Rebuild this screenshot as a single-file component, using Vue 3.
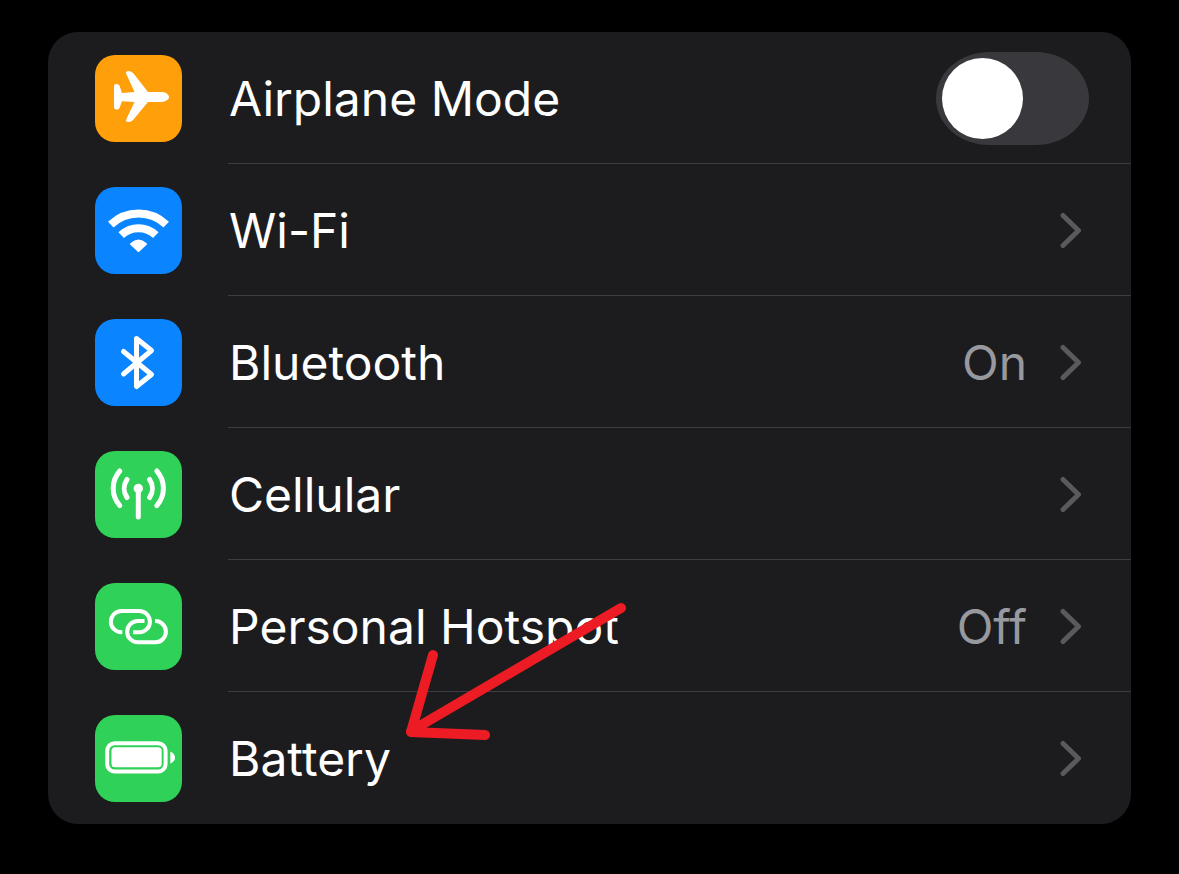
<template>
  <main class="settings">
    <ul class="group">
      <li v-for="item in items" :key="item.id">
        <component
          :is="item.toggle ? 'label' : 'a'"
          class="row"
          :for="item.toggle ? item.id : undefined"
          :href="item.toggle ? undefined : '#' + item.id"
        >
          <span class="tile" :class="item.color">
            <svg v-if="item.id === 'airplane'" viewBox="0 0 87 87" aria-hidden="true">
              <path
                class="solid"
                d="M53 37 L38.5 18.5 Q36.5 16 33.5 16 Q30.3 16 31.2 18.7 L39.5 37 L27 38 L24.5 30.6 Q23.8 29 21.5 29 Q19 29 19 31 V52.5 Q19 54.5 21.5 54.5 Q23.8 54.5 24.5 53 L27 46.3 L39.5 47 L31.2 64.5 Q30.3 67 33.5 67 Q36.5 67 38.5 64.5 L53 47 H67 C71 46.5 74 44.5 74 42 C74 39.5 71 37.3 67 37 Z"
              />
            </svg>
            <svg v-else-if="item.id === 'wifi'" viewBox="0 0 87 87" aria-hidden="true">
              <path class="line wave" d="M15.8 37.6 A40 40 0 0 1 71.2 37.6" />
              <path class="line wave" d="M26.2 48.2 A25 25 0 0 1 60.8 48.2" />
              <path class="solid wedge" d="M36 57 Q43.5 50.3 51 57 L43.5 64 Z" />
            </svg>
            <svg v-else-if="item.id === 'bluetooth'" viewBox="0 0 87 87" aria-hidden="true">
              <path class="line rune" d="M28.5 32.5 L56.5 55.5 L41.5 67.5 V19.5 L56.5 31.5 L28.5 55" />
            </svg>
            <svg v-else-if="item.id === 'cellular'" viewBox="0 0 87 87" aria-hidden="true">
              <circle class="solid" cx="43.3" cy="37.5" r="4.7" />
              <path class="line mast" d="M43.3 38 V66" />
              <path class="line mast" d="M32 28.5 A16 16 0 0 0 32 46.5 M54.6 28.5 A16 16 0 0 1 54.6 46.5" />
              <path class="line mast" d="M24.8 20 A26 26 0 0 0 24.8 54.6 M61.8 20 A26 26 0 0 1 61.8 54.6" />
            </svg>
            <svg v-else-if="item.id === 'hotspot'" viewBox="0 0 87 87" aria-hidden="true">
              <path class="line" d="M27.3 49.3 H26.5 A10.6 10.6 0 0 1 26.5 28 H44.3 A10.6 10.6 0 0 1 44.3 49.3 H38" />
              <path class="line" d="M49.5 38 H42.8 A10.6 10.6 0 0 0 42.8 59.3 H60.5 A10.6 10.6 0 0 0 60 38" />
            </svg>
            <svg v-else viewBox="0 0 87 87" aria-hidden="true">
              <rect class="line" x="12.2" y="28.2" width="58.4" height="28.4" rx="7.5" />
              <rect class="solid" x="16.5" y="32.3" width="50.2" height="20" rx="3.5" />
              <path class="solid" d="M75.3 36.5 Q80 38.5 80 42.5 Q80 46.5 75.3 48.5 Z" />
            </svg>
          </span>
          <span class="content">
            <span class="name">{{ item.name }}</span>
            <input
              v-if="item.toggle"
              :id="item.id"
              v-model="airplane"
              class="switch"
              type="checkbox"
              role="switch"
            />
            <template v-else>
              <span v-if="item.value" class="value">{{ item.value }}</span>
              <svg class="chevron" viewBox="0 0 24 38" aria-hidden="true">
                <path d="M4 3.5 L19.5 18.5 L4 33.5" />
              </svg>
            </template>
          </span>
        </component>
      </li>
      <li class="marker" aria-hidden="true">
        <svg viewBox="0 0 225 142">
          <path d="M216 8 L6 131 M28 55 L6 132 L80 135" />
          <path class="corner" d="M8 122 L6 132 L20 131 Z" />
        </svg>
      </li>
    </ul>
  </main>
</template>

<script setup>
import { ref } from 'vue'

const airplane = ref(false)

const items = [
  { id: 'airplane', name: 'Airplane Mode', color: 'orange', toggle: true },
  { id: 'wifi', name: 'Wi-Fi', color: 'blue' },
  { id: 'bluetooth', name: 'Bluetooth', color: 'blue', value: 'On' },
  { id: 'cellular', name: 'Cellular', color: 'green' },
  { id: 'hotspot', name: 'Personal Hotspot', color: 'green', value: 'Off' },
  { id: 'battery', name: 'Battery', color: 'green' }
]
</script>

<style>
body {
  background: #000;
}
</style>

<style scoped>
.settings {
  padding: 32px 48px 50px;
  font-family: Inter, "Liberation Sans", sans-serif;
  font-size: 48px;
  line-height: 60px;
  color: #fff;
}

.group {
  position: relative;
  margin: 0;
  padding: 0;
  list-style: none;
  background: #1c1c1e;
  border-radius: 30px;
}

.row {
  display: flex;
  align-items: center;
  gap: 46px;
  padding-left: 47px;
  color: inherit;
  text-decoration: none;
}

.tile {
  flex: none;
  width: 87px;
  height: 87px;
  border-radius: 20px;
}

.tile svg {
  display: block;
}

.orange {
  background: #ff9f0a;
}

.blue {
  background: #0a84ff;
}

.green {
  background: #30d158;
}

.solid {
  fill: #fff;
}

.line {
  fill: none;
  stroke: #fff;
  stroke-width: 4px;
}

.wave {
  stroke-width: 8px;
}

.wedge {
  stroke: #fff;
  stroke-width: 2px;
  stroke-linejoin: round;
}

.rune,
.mast {
  stroke-width: 5px;
  stroke-linecap: round;
  stroke-linejoin: round;
}

.content {
  flex: 1;
  display: flex;
  align-items: center;
  box-sizing: border-box;
  height: 132px;
  padding: 2px 48px 0 1px;
  border-bottom: 1px solid #3d3d41;
}

.row[for] .content {
  padding-right: 42px;
}

li:nth-last-child(2) .content {
  border-bottom-color: transparent;
}

.name {
  flex: 1;
}

.value {
  color: #98989f;
}

.chevron {
  flex: none;
  width: 24px;
  height: 38px;
  margin-left: 32px;
}

.chevron path {
  fill: none;
  stroke: #5a5a5e;
  stroke-width: 5px;
  stroke-linecap: round;
  stroke-linejoin: round;
}

.switch {
  appearance: none;
  flex: none;
  width: 153px;
  height: 93px;
  margin: 0;
  padding: 6px;
  box-sizing: border-box;
  border-radius: 54px / 47px;
  background: #39393d;
}

.switch::before {
  content: "";
  display: block;
  width: 81px;
  height: 81px;
  border-radius: 50%;
  background: #fff;
}

.switch:checked {
  background: #30d158;
}

.switch:checked::before {
  margin-left: auto;
}

.marker {
  position: absolute;
  top: 568px;
  left: 357px;
  width: 225px;
  height: 142px;
  pointer-events: none;
}

.marker svg {
  display: block;
}

.marker path {
  fill: none;
  stroke: #ed1c24;
  stroke-width: 10px;
  stroke-linecap: round;
  stroke-linejoin: round;
}

.marker .corner {
  fill: #ed1c24;
  stroke-width: 6px;
}
</style>
